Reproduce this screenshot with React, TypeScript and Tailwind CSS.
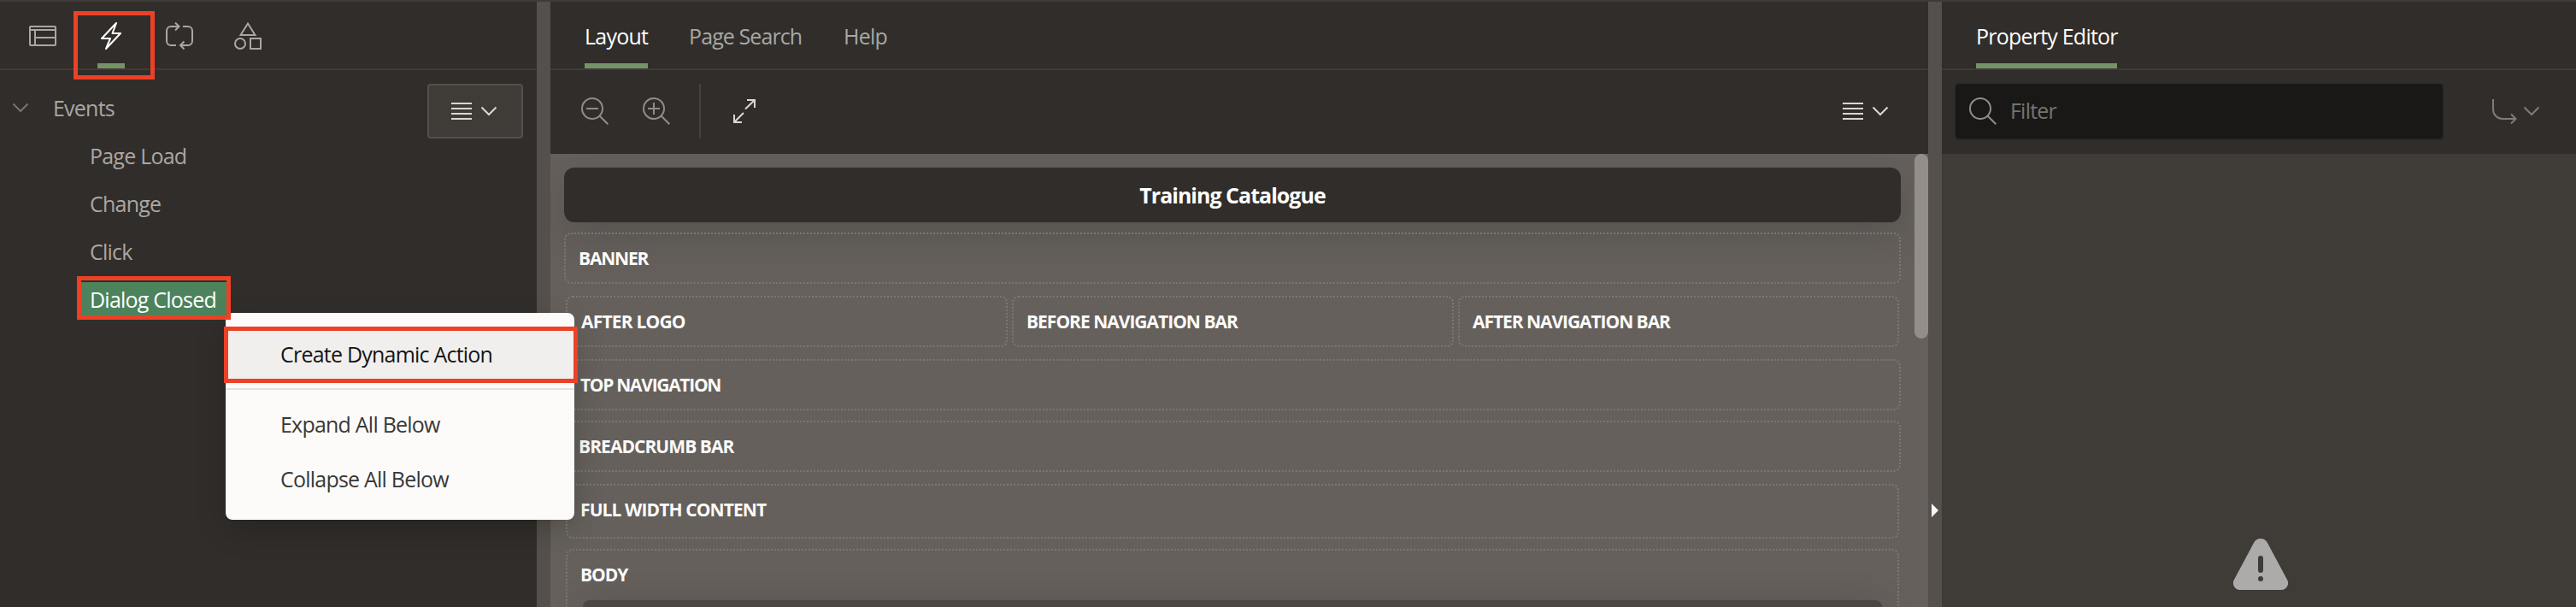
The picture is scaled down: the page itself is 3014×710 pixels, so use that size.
import React from "react";

const Lines = ({ className = "" }: { className?: string }) => (
  <svg className={className} width="24" height="20" viewBox="0 0 24 20" fill="none" stroke="#d9d7d3" strokeWidth="2">
    <path d="M0 1h24M0 7h24M0 13h24M0 19h24" />
  </svg>
);

const Chevron = ({ color }: { color: string }) => (
  <svg width="20" height="12" viewBox="0 0 20 12" fill="none" stroke={color} strokeWidth="2">
    <path d="M1.500 1.500 10 10l8.500-8.500" />
  </svg>
);

const Magnifier = ({ sign, color }: { sign?: string; color: string }) => (
  <svg width="32" height="32" viewBox="0 0 32 32" fill="none" stroke={color} strokeWidth="2">
    <circle cx="13" cy="13" r="12" />
    <path d="M21.500 21.500 31.300 31.300" />
    {sign && <path d={sign} />}
  </svg>
);

function LayoutIcon() {
  return (
    <svg width="32" height="32" viewBox="0 0 32 32" fill="none" stroke="#a9a7a4" strokeWidth="2">
      <rect x="1" y="5" width="30" height="22" rx="1" />
      <path d="M1 9h30M7 9v18M7 18h24" />
    </svg>
  );
}

function BoltIcon() {
  return (
    <svg width="32" height="32" viewBox="0 0 32 32" fill="none" stroke="#ffffff" strokeWidth="2" strokeLinejoin="round">
      <path d="M22 1 5 19h10L10 31 27 13H17.500z" />
    </svg>
  );
}

function CycleIcon() {
  return (
    <svg width="32" height="32" viewBox="0 0 32 32" fill="none" stroke="#a9a7a4" strokeWidth="2">
      <path d="M12 27H6a5 5 0 0 1-5-5V10a5 5 0 0 1 5-5h9M11 0.500 15.500 5 11 9.500M20 5h6a5 5 0 0 1 5 5v12a5 5 0 0 1-5 5h-9M21.500 22.500 17 27l4.500 4.500" />
    </svg>
  );
}

function ShapesIcon() {
  return (
    <svg width="32" height="32" viewBox="0 0 32 32" fill="none" stroke="#a9a7a4" strokeWidth="2">
      <path d="M16 1.500 24.500 15h-17zM19 19h12v12H19z" />
      <circle cx="7" cy="25" r="6" />
    </svg>
  );
}

const text = "whitespace-nowrap leading-[56px]";

function Region({ label, className }: { label: string; className: string }) {
  return (
    <div className={"shrink-0 rounded-lg border-2 border-dotted border-[#7c7773] text-[21px] font-bold text-[#fcfbfa] whitespace-nowrap " + className}>
      {label}
    </div>
  );
}

function LeftPanel() {
  return (
    <section className="w-[628px] shrink-0 border-t-2 border-[#3f3b37] bg-[#312d2a]">
      <div className="flex h-20 gap-12 border-b-2 border-[#3f3b37] pl-[34px] pt-6">
        <LayoutIcon />
        <div className="flex flex-col justify-between">
          <BoltIcon />
          <div className="h-1.5 w-8 bg-[#759269]" />
        </div>
        <CycleIcon />
        <ShapesIcon />
      </div>
      <div className="flex">
        <div className="flex grow flex-col pt-[16px] text-[#a9a7a4]">
          <div className="flex h-14 items-center pl-[14px]">
            <Chevron color="#767370" />
            <span className={text + " pl-7"}>Events</span>
          </div>
          <span className={text + " pl-[105px]"}>Page Load</span>
          <span className={text + " pl-[105px]"}>Change</span>
          <span className={text + " pl-[105px]"}>Click</span>
          <div className="ml-[95px] mt-[8px] h-[41px] w-[170px] bg-[#4c825c] pl-2.5 leading-[41px] text-white whitespace-nowrap">
            Dialog Closed
          </div>
        </div>
        <div className="mr-4 mt-4 flex h-16 w-28 items-center gap-2.5 rounded border-2 border-[#55504b] bg-[#3f3b36] pl-[26px]">
          <Lines />
          <Chevron color="#d9d7d3" />
        </div>
      </div>
    </section>
  );
}

function CenterPanel() {
  return (
    <section className="flex w-[1612px] shrink-0 flex-col border-t-2 border-[#3f3b37] bg-[#312d2a]">
      <div className="flex h-20 shrink-0 border-b-2 border-[#3f3b37] pl-10 leading-[80px] text-[#a9a7a4] whitespace-nowrap">
        <div className="h-[78px] w-[74px] border-b-6 border-[#759269] text-white">Layout</div>
        <div className="ml-[48px] w-[133px] tracking-[-0.9px]">Page Search</div>
        <div className="ml-[48px]">Help</div>
      </div>
      <div className="flex h-[98px] shrink-0 pl-9 pr-[46px] pt-4">
        <div className="flex h-16 items-center">
          <Magnifier color="#8f8c89" sign="M6 13h14" />
          <div className="w-10" />
          <Magnifier color="#8f8c89" sign="M6 13h14M13 6v14" />
          <div className="ml-[34px] h-16 w-0.5 bg-[#45413d]" />
          <svg className="ml-9" width="32" height="32" viewBox="0 0 32 32" fill="none" stroke="#d9d7d3" strokeWidth="2">
            <path d="M18 3h9v9M26.500 3.500 16 13.500M12 29H3v-9M3.500 28.500 14 18" />
          </svg>
        </div>
        <div className="ml-auto flex h-16 items-center gap-2.5">
          <Lines />
          <Chevron color="#d9d7d3" />
        </div>
      </div>
      <div className="flex h-[530px] overflow-hidden bg-[#65605c]">
        <div className="flex w-[1596px] flex-col pl-4 pr-4 pt-4">
          <div className="h-16 shrink-0 rounded-xl bg-[#312d2a] text-center tracking-[-0.98px] font-bold leading-[64px] text-white shadow-[0_16px_48px_rgba(0,0,0,0.15)]">
            Training Catalogue
          </div>
          <Region label="BANNER" className="mt-3 h-[60px] pl-[15px] leading-[57px] tracking-[-1.2px]" />
          <div className="mt-[14px] flex shrink-0 gap-[5px] px-0.5">
            <Region label="AFTER LOGO" className="h-[60px] w-[517px] pl-4 leading-[57px] tracking-[-0.8px]" />
            <Region label="BEFORE NAVIGATION BAR" className="h-[60px] w-[517px] pl-[15px] leading-[57px] tracking-[-1px]" />
            <Region label="AFTER NAVIGATION BAR" className="h-[60px] w-[516px] pl-[15px] leading-[57px] tracking-[-1.05px]" />
          </div>
          <Region label="TOP NAVIGATION" className="mt-[14px] h-[60px] pl-[17px] leading-[57px] tracking-[-1.3px]" />
          <Region label="BREADCRUMB BAR" className="mt-3 h-[60px] pl-[15px] leading-[57px] tracking-[-0.95px]" />
          <Region label="FULL WIDTH CONTENT" className="mx-0.5 mt-[14px] h-16 pl-[15px] leading-[57px] tracking-[-0.9px]" />
          <div className="mx-0.5 mt-3 h-32 shrink-0 rounded-lg border-2 border-dotted border-[#7c7773] px-[18px] text-[21px] font-bold leading-[58px] tracking-[-1px] text-[#fcfbfa]">
            <div className="-ml-[3px] -mt-px mb-px">BODY</div>
            <div className="h-16 rounded-lg bg-[#4b4643] shadow-[0_4px_40px_rgba(0,0,0,0.15)]" />
          </div>
        </div>
        <div className="h-[216px] w-4 rounded-full bg-[#938e8a]" />
      </div>
    </section>
  );
}

function RightPanel() {
  return (
    <section className="flex grow flex-col border-t-2 border-[#3f3b37] bg-[#312d2a]">
      <div className="h-20 shrink-0 border-b-2 border-[#3f3b37] pl-10 leading-[80px] text-white whitespace-nowrap">
        <div className="h-[78px] w-[165px] border-b-6 border-[#759269]">Property Editor</div>
      </div>
      <div className="flex h-[98px] shrink-0 pl-4 pt-4">
        <div className="flex h-16 w-[570px] items-center gap-4 rounded bg-[#1a1816] pl-4 text-[#757370] shadow-[0_1px_3px_rgba(0,0,0,0.3)]">
          <Magnifier color="#8f8c89" />
          <span>Filter</span>
        </div>
        <div className="ml-14 flex h-16 items-center">
          <svg width="32" height="32" viewBox="0 0 32 32" fill="none" stroke="#7f7c79" strokeWidth="2">
            <path d="M3 2v12a11 11 0 0 0 11 11h15M24 19.500 29.500 25 24 30.500" />
          </svg>
          <div className="w-1.5" />
          <Chevron color="#7f7c79" />
        </div>
      </div>
      <div className="flex h-[530px] justify-center bg-[#3f3b36] pt-[450px]">
        <svg className="ml-1" width="64" height="60" viewBox="0 0 64 60">
          <path d="M24 5a9 9 0 0 1 16 0L63 48a8 8 0 0 1-7 12H8a8 8 0 0 1-7-12z" fill="#adabaa" />
          <path d="M32 23v14" stroke="#3f3b36" strokeWidth="6" strokeLinecap="round" />
          <circle cx="32" cy="47" r="3" fill="#3f3b36" />
        </svg>
      </div>
    </section>
  );
}

function ContextMenu() {
  return (
    <div className="absolute left-[264px] top-[366px] h-[242px] w-[408px] rounded-lg bg-[#fcfbfa] pt-[21px] text-[#3a3835] shadow-[0_12px_36px_-4px_rgba(0,0,0,0.25)] whitespace-nowrap">
      <div className="h-14 bg-[#f0efed] pl-16 leading-[54px] text-[#161513]">Create Dynamic Action</div>
      <div className="mt-[11px] h-0.5 bg-[#e4e2e0]" />
      <div className="mt-3 pl-16 leading-[56px]">Expand All Below</div>
      <div className="mt-2 pl-16 leading-[56px]">Collapse All Below</div>
    </div>
  );
}

export default function App() {
  return (
    <div className="relative flex h-[710px] w-[3014px] overflow-hidden bg-[#312d2a] font-['Open_Sans',sans-serif] text-[25px] tracking-[-0.78px]">
      <LeftPanel />
      <div className="w-4 shrink-0 border-t-2 border-[#3f3b37] bg-[#55504b]" />
      <CenterPanel />
      <div className="w-4 shrink-0 border-t-2 border-[#3f3b37] bg-[#55504b] pl-1 pt-[587px]">
        <svg width="8" height="16" viewBox="0 0 8 16">
          <path d="M0 0 8 8 0 16z" fill="#fcfbfa" />
        </svg>
      </div>
      <RightPanel />
      <ContextMenu />
      <div className="absolute left-[86px] top-[13px] h-20 w-[95px] border-5 border-[#ec4126]" />
      <div className="absolute left-[90px] top-[323px] h-[51px] w-[180px] border-5 border-[#ec4126]" />
      <div className="absolute left-[262px] top-[382px] h-[66px] w-[414px] border-5 border-[#ec4126]" />
    </div>
  );
}
